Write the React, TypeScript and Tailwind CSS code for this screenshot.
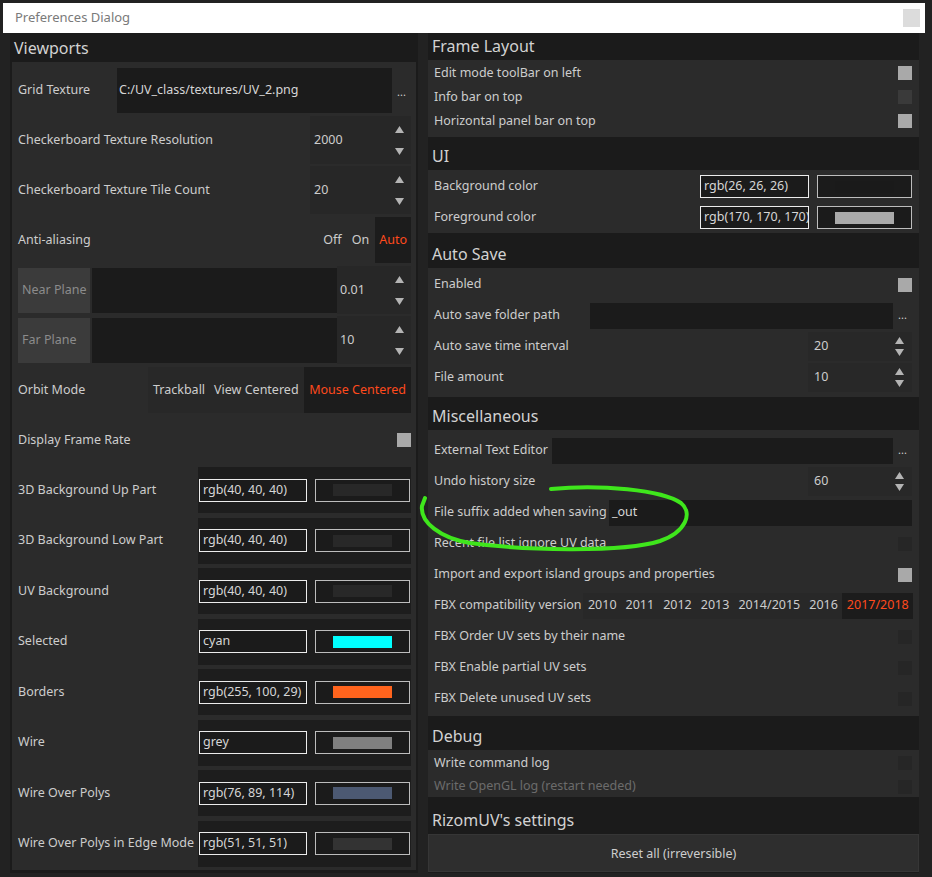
import React from "react";

const Up = () => (
  <svg width="9" height="7" viewBox="0 0 9 7"><polygon points="0,7 4.5,0 9,7" fill="#b4b4b4" /></svg>
);
const Down = () => (
  <svg width="9" height="7" viewBox="0 0 9 7"><polygon points="0,0 9,0 4.5,7" fill="#b4b4b4" /></svg>
);

const Arrows = ({ gap }: { gap: string }) => (
  <div className={`flex flex-col items-center ${gap}`}>
    <Up />
    <Down />
  </div>
);

const Check = ({ tone }: { tone: "on" | "mid" | "dark" }) => (
  <div
    className={
      "w-[14px] h-[14px] shrink-0 " +
      (tone === "on" ? "bg-[#a9a9a9]" : tone === "mid" ? "bg-[#3a3a3a]" : "bg-[#262626]")
    }
  />
);

const Header = ({ title, h }: { title: string; h: string }) => (
  <div className={`${h} flex items-end pb-[4px] pl-[4px] leading-[20px] text-[16px] text-[#d2d2d2] bg-[#1b1b1b]`}>
    {title}
  </div>
);

const colorRows: { label: string; value: string; sw: string }[] = [
  { label: "3D Background Up Part", value: "rgb(40, 40, 40)", sw: "bg-[#282828]" },
  { label: "3D Background Low Part", value: "rgb(40, 40, 40)", sw: "bg-[#282828]" },
  { label: "UV Background", value: "rgb(40, 40, 40)", sw: "bg-[#282828]" },
  { label: "Selected", value: "cyan", sw: "bg-[#00ffff]" },
  { label: "Borders", value: "rgb(255, 100, 29)", sw: "bg-[#ff641d]" },
  { label: "Wire", value: "grey", sw: "bg-[#808080]" },
  { label: "Wire Over Polys", value: "rgb(76, 89, 114)", sw: "bg-[#4c5972]" },
  { label: "Wire Over Polys in Edge Mode", value: "rgb(51, 51, 51)", sw: "bg-[#333333]" },
];

const LRow = ({ children, h = "h-[50px]" }: { children: React.ReactNode; h?: string }) => (
  <div className={`${h} flex items-center pl-[6px] pr-[5px]`}>{children}</div>
);

const RRow = ({ children, h }: { children: React.ReactNode; h: string }) => (
  <div className={`${h} flex items-center pl-[6px] pr-[7px] pt-[2px]`}>{children}</div>
);

const ColorPair = ({ value, sw, inputW }: { value: string; sw: string; inputW: string }) => (
  <div className="flex items-center gap-[8px]">
    <div className={`${inputW} h-[23px] border border-[#ececec] bg-[#1b1b1b] flex items-center pl-[3px] text-[#d6d6d6] whitespace-nowrap overflow-hidden`}>
      {value}
    </div>
    <div className="w-[95px] h-[23px] border border-[#bdbdbd] bg-[#1b1b1b] flex items-center justify-center">
      <div className={`w-[59px] h-[12px] ${sw}`} />
    </div>
  </div>
);

export default function App() {
  return (
    <div className="relative w-[932px] h-[877px] overflow-hidden bg-[#222222] font-['Noto_Sans',sans-serif] text-[12.5px] text-[#cdcdcd]">
      {/* title bar */}
      <div className="mx-[3px] mt-[3px] h-[30px] w-[922px] bg-white flex items-center justify-between pl-[12px] pr-[5px]">
        <span className="text-[13px] text-[#7a7a7a]">Preferences Dialog</span>
        <div className="w-[17px] h-[18px] bg-[#dcdcdc]" />
      </div>

      <div className="flex pl-[10px] gap-[10px]">
        {/* LEFT column */}
        <div className="w-[408px] h-[840px] bg-[#1b1b1b]">
          <Header title="Viewports" h="h-[29px]" />
          <div className="mx-[2px] bg-[#2b2b2b] pt-[3px] h-[808px]">
            <LRow>
              <span className="w-[99px] shrink-0">Grid Texture</span>
              <div className="flex-1 h-[45px] bg-[#1b1b1b] flex items-center pl-[2px] text-[#d6d6d6]">
                C:/UV_class/textures/UV_2.png
              </div>
              <div className="w-[19px] text-center text-[11px] leading-none pt-[2px]">...</div>
            </LRow>
            {[
              ["Checkerboard Texture Resolution", "2000"],
              ["Checkerboard Texture Tile Count", "20"],
            ].map(([l, v]) => (
              <LRow key={l}>
                <span className="flex-1">{l}</span>
                <div className="w-[101px] h-[48px] bg-[#272727] flex items-center justify-between pl-[4px] pr-[7px]">
                  <span>{v}</span>
                  <Arrows gap="gap-[15px]" />
                </div>
              </LRow>
            ))}
            <LRow>
              <span className="flex-1">Anti-aliasing</span>
              <div className="flex items-center gap-[2px]">
                <span className="px-[4px]">Off</span>
                <span className="px-[4px]">On</span>
                <span className="px-[4px] h-[46px] flex items-center bg-[#1c1c1c] text-[#ff4a1c]">Auto</span>
              </div>
            </LRow>
            {[
              ["Near Plane", "0.01"],
              ["Far Plane", "10"],
            ].map(([l, v]) => (
              <LRow key={l}>
                <div className="w-[72px] h-[45px] bg-[#3b3b3b] flex items-center pl-[4px] text-[#8c8c8c] shrink-0">{l}</div>
                <div className="ml-[2px] flex-1 h-[45px] bg-[#1b1b1b]" />
                <div className="w-[74px] h-[48px] bg-[#272727] flex items-center justify-between pl-[3px] pr-[7px]">
                  <span>{v}</span>
                  <Arrows gap="gap-[15px]" />
                </div>
              </LRow>
            ))}
            <LRow>
              <span className="flex-1">Orbit Mode</span>
              <div className="w-[263px] h-[46px] bg-[#282828] flex items-center whitespace-nowrap">
                <span className="pl-[5px]">Trackball</span>
                <span className="ml-[9px]">View Centered</span>
                <span className="ml-auto h-[46px] flex items-center px-[5px] bg-[#1c1c1c] text-[#ff4a1c]">Mouse Centered</span>
              </div>
            </LRow>
            <LRow>
              <span className="flex-1">Display Frame Rate</span>
              <Check tone="on" />
            </LRow>
            {colorRows.map((r) => (
              <LRow key={r.label} h="h-[50.5px]">
                <span className="flex-1 min-w-0 whitespace-nowrap">{r.label}</span>
                <div className="w-[213px] h-[46px] bg-[#1d1d1d] flex items-center pl-[1px] shrink-0">
                  <ColorPair value={r.value} sw={r.sw} inputW="w-[108px]" />
                </div>
              </LRow>
            ))}
          </div>
        </div>

        {/* RIGHT column */}
        <div className="w-[491px] h-[840px] bg-[#1b1b1b]">
          <Header title="Frame Layout" h="h-[27px]" />
          <div className="bg-[#2b2b2b] pb-[5px]">
            <RRow h="h-[24px]"><span className="flex-1">Edit mode toolBar on left</span><Check tone="on" /></RRow>
            <RRow h="h-[24px]"><span className="flex-1">Info bar on top</span><Check tone="mid" /></RRow>
            <RRow h="h-[24px]"><span className="flex-1">Horizontal panel bar on top</span><Check tone="on" /></RRow>
          </div>

          <Header title="UI" h="h-[33px]" />
          <div className="bg-[#2b2b2b] pb-[1px]">
            <RRow h="h-[31px]">
              <span className="flex-1">Background color</span>
              <ColorPair value="rgb(26, 26, 26)" sw="bg-[#1a1a1a]" inputW="w-[109px]" />
            </RRow>
            <RRow h="h-[31px]">
              <span className="flex-1">Foreground color</span>
              <ColorPair value="rgb(170, 170, 170)" sw="bg-[#aaaaaa]" inputW="w-[109px]" />
            </RRow>
          </div>

          <Header title="Auto Save" h="h-[35px]" />
          <div className="bg-[#2b2b2b] pb-[5px]">
            <RRow h="h-[31px]"><span className="flex-1">Enabled</span><Check tone="on" /></RRow>
            <RRow h="h-[31px]">
              <span className="w-[156px] shrink-0">Auto save folder path</span>
              <div className="flex-1 h-[26px] bg-[#1b1b1b]" />
              <div className="w-[19px] text-center text-[11px]">...</div>
            </RRow>
            {[
              ["Auto save time interval", "20"],
              ["File amount", "10"],
            ].map(([l, v]) => (
              <RRow key={l} h="h-[31px]">
                <span className="flex-1">{l}</span>
                <div className="w-[104px] h-[29px] bg-[#282828] flex items-center justify-between pl-[6px] pr-[8px]">
                  <span>{v}</span>
                  <Arrows gap="gap-[5px]" />
                </div>
              </RRow>
            ))}
          </div>

          <Header title="Miscellaneous" h="h-[33px]" />
          <div className="bg-[#2b2b2b] pt-[4px] pb-[3px]">
            <RRow h="h-[31px]">
              <span className="w-[118px] shrink-0">External Text Editor</span>
              <div className="flex-1 h-[26px] bg-[#1b1b1b]" />
              <div className="w-[19px] text-center text-[11px]">...</div>
            </RRow>
            <RRow h="h-[31px]">
              <span className="flex-1">Undo history size</span>
              <div className="w-[104px] h-[29px] bg-[#282828] flex items-center justify-between pl-[6px] pr-[8px]">
                <span>60</span>
                <Arrows gap="gap-[5px]" />
              </div>
            </RRow>
            <RRow h="h-[31px]">
              <span className="w-[175px] shrink-0 whitespace-nowrap">File suffix added when saving</span>
              <div className="flex-1 h-[26px] bg-[#1b1b1b] flex items-center pl-[3px] text-[#d6d6d6]">_out</div>
            </RRow>
            <RRow h="h-[31px]"><span className="flex-1">Recent file list ignore UV data</span><Check tone="dark" /></RRow>
            <RRow h="h-[31px]"><span className="flex-1">Import and export island groups and properties</span><Check tone="on" /></RRow>
            <RRow h="h-[31px]">
              <span className="shrink-0 whitespace-nowrap">FBX compatibility version</span>
              <div className="flex-1 h-[26px] flex items-center justify-end bg-[#282828] ml-[2px] whitespace-nowrap">
                {["2010", "2011", "2012", "2013", "2014/2015", "2016"].map((y) => (
                  <span key={y} className="px-[4.5px]">{y}</span>
                ))}
                <span className="px-[4.5px] h-[26px] flex items-center bg-[#1c1c1c] text-[#ff4a1c]">2017/2018</span>
              </div>
            </RRow>
            <RRow h="h-[31px]"><span className="flex-1">FBX Order UV sets by their name</span><Check tone="dark" /></RRow>
            <RRow h="h-[31px]"><span className="flex-1">FBX Enable partial UV sets</span><Check tone="dark" /></RRow>
            <RRow h="h-[31px]"><span className="flex-1">FBX Delete unused UV sets</span><Check tone="dark" /></RRow>
          </div>

          <Header title="Debug" h="h-[34px]" />
          <div className="bg-[#2b2b2b]">
            <RRow h="h-[24px]"><span className="flex-1">Write command log</span><Check tone="dark" /></RRow>
            <RRow h="h-[23px]"><span className="flex-1 text-[#6b6b6b]">Write OpenGL log (restart needed)</span><Check tone="dark" /></RRow>
          </div>

          <Header title="RizomUV's settings" h="h-[37px]" />
          <div className="h-[38px] bg-[#2e2e2e] border border-[#363636] flex items-center justify-center pt-[2px]">
            Reset all (irreversible)
          </div>
        </div>
      </div>

      {/* hand-drawn green annotation */}
      <svg className="absolute left-0 top-0 pointer-events-none" width="932" height="877" viewBox="0 0 932 877">
        <path
          d="M 551 489 C 600 484, 662 490, 681 503 C 693 513, 686 532, 660 541 C 622 553, 520 550, 470 543 C 440 538, 420 522, 422 506 L 425 498"
          fill="none"
          stroke="#3fe61c"
          strokeWidth="4"
          strokeLinecap="round"
        />
      </svg>
    </div>
  );
}
